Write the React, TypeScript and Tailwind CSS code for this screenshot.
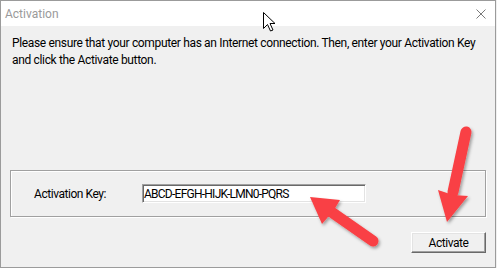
export default function App() {
  return (
    <div className="relative h-[268px] w-[497px] overflow-hidden bg-[#f0f0f0] font-['Roboto',sans-serif] text-[12px] tracking-[-0.45px] text-black">
      <div className="flex h-full w-[496px] flex-col border border-[#9b9b9b]">
        {/* title bar */}
        <div className="flex h-[25px] items-center justify-between bg-white pl-[4px] pr-[9px]">
          <span className="text-[12px] tracking-normal text-[#9a9a9a]">Activation</span>
          <svg width="10" height="10" viewBox="0 0 10 10">
            <path d="M0.5 0.5L9.5 9.5M9.5 0.5L0.5 9.5" stroke="#7a7a7a" strokeWidth="1" />
          </svg>
        </div>

        {/* body */}
        <div className="flex flex-1 flex-col pl-[9px] pr-[9px]">
          <p className="ml-[2px] mt-[9px] whitespace-nowrap leading-[17px] tracking-[-0.34px]">
            Please ensure that your computer has an Internet connection. Then, enter your Activation Key
            <br />
            and click the Activate button.
          </p>

          <div className="mt-auto flex h-[47px] items-center border border-[#a0a0a0] pl-[23px] shadow-[inset_1px_1px_0_#fff,1px_1px_0_#fff]">
            <span className="w-[108px]">Activation Key:</span>
            <div className="flex h-[19px] w-[224px] items-center whitespace-nowrap border border-b-white border-l-[#a0a0a0] border-r-white border-t-[#a0a0a0] bg-white pl-[1px] tracking-[-0.75px] shadow-[inset_1px_1px_0_#696969,inset_-1px_-1px_0_#e3e3e3]">
              ABCD-EFGH-HIJK-LMN0-PQRS
            </div>
          </div>

          <div className="mb-[14px] mt-[15px] flex justify-end">
            <button className="flex h-[21px] w-[75px] items-center justify-center border border-b-[#696969] border-l-white border-r-[#696969] border-t-white bg-[#f0f0f0] text-[12px] shadow-[inset_-1px_-1px_0_#a0a0a0,inset_1px_1px_0_#e3e3e3]">
              Activate
            </button>
          </div>
        </div>
      </div>

      {/* annotation overlay: arrows + mouse cursor */}
      <svg className="pointer-events-none absolute left-0 top-0" width="497" height="268">
        <defs>
          <filter id="sh" x="-20%" y="-20%" width="140%" height="140%">
            <feDropShadow dx="1.5" dy="2" stdDeviation="1.5" floodColor="#000" floodOpacity="0.35" />
          </filter>
        </defs>
        <g filter="url(#sh)" fill="#f94144" stroke="#f94144">
          <line x1="373" y1="241" x2="330" y2="211" strokeWidth="11" strokeLinecap="round" />
          <polygon points="310,197 340,200 334,210 322,224" stroke="none" />
          <line x1="466" y1="132" x2="453" y2="192" strokeWidth="11" strokeLinecap="round" />
          <polygon points="447,222 438,190 453,195 468,196" stroke="none" />
        </g>
        <path
          d="M263.5 12.5 L263.5 28.5 L267.5 24.5 L270.5 31 L273 30 L270 23.5 L275 23.5 Z"
          fill="#fff"
          stroke="#000"
          strokeWidth="1"
          strokeLinejoin="miter"
        />
      </svg>
    </div>
  );
}
